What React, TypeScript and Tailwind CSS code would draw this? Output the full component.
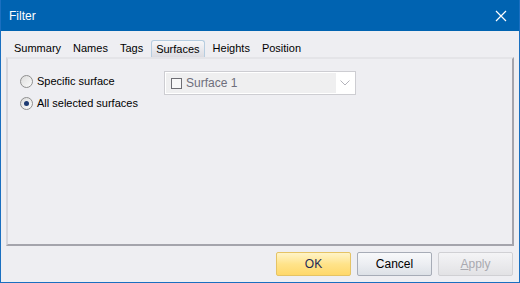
import React from "react";

const tabs = ["Summary", "Names", "Tags", "Surfaces", "Heights", "Position"];

function Radio({ checked }: { checked?: boolean }) {
  return (
    <span className="flex h-[13px] w-[13px] items-center justify-center rounded-full border border-[#8f8f8f] bg-gradient-to-br from-[#dcdcdc] to-[#fbfbfb]">
      {checked && <span className="h-[5px] w-[5px] rounded-full bg-[#1d3a72]" />}
    </span>
  );
}

export default function App() {
  return (
    <div
      className="flex h-[283px] w-[520px] flex-col border border-t-0 border-[#1a6fc0] bg-[#eeeef2] text-[11px] text-black"
      style={{ fontFamily: '"Liberation Sans", Arial, sans-serif' }}
    >
      {/* title bar */}
      <div className="flex h-[31px] items-center justify-between bg-[#0063b1] pl-[8px] pr-[10px] text-white">
        <span className="text-[12px]">Filter</span>
        <svg width="12" height="12" viewBox="0 0 12 12" className="mr-[2px]">
          <path d="M1 1 L11 11 M11 1 L1 11" stroke="#fff" strokeWidth="1.2" />
        </svg>
      </div>

      {/* tabs */}
      <div className="flex h-[26px] items-end pl-[7px] pt-[8px]">
        {tabs.map((t) =>
          t === "Surfaces" ? (
            <div
              key={t}
              className="mx-[2px] flex h-[17px] items-center rounded-t-[3px] border border-b-0 border-[#b6cde0] bg-gradient-to-b from-[#f7f7f9] to-[#dcdce2] px-[4px] leading-none"
            >
              {t}
            </div>
          ) : (
            <div key={t} className="flex h-[17px] items-center px-[6px] leading-none">
              {t}
            </div>
          )
        )}
      </div>

      {/* panel */}
      <div className="mx-[5px] h-[189px] border-2 border-l-[#d6d6dc] border-t-[#e4e4e8] border-r-[#a4a4ac] border-b-[#a4a4ac]">
        <div className="flex items-start pl-[12px] pt-[12px]">
          <div className="flex w-[144px] flex-col gap-[6px] pt-[2px] leading-[16px]">
            <label className="flex items-center gap-[4px]">
              <Radio />
              <span>Specific surface</span>
            </label>
            <label className="flex items-center gap-[4px]">
              <Radio checked />
              <span>All selected surfaces</span>
            </label>
          </div>
          <div className="flex h-[24px] w-[192px] items-stretch border border-[#cdcdd2] bg-white p-[1px]">
            <div className="flex flex-1 items-center gap-[4px] bg-[#efeff0] pl-[5px] text-[#6e6e7c]">
              <span className="h-[11px] w-[11px] border border-[#6e6e74] bg-[#f8f8f8]" />
              <span className="text-[12px]">Surface 1</span>
            </div>
            <div className="flex w-[18px] items-center justify-center">
              <svg width="10" height="6" viewBox="0 0 10 6">
                <path d="M0.5 0.5 L5 5 L9.5 0.5" fill="none" stroke="#b4b4bc" strokeWidth="1" />
              </svg>
            </div>
          </div>
        </div>
      </div>

      {/* buttons */}
      <div className="flex justify-end gap-[6px] pr-[6px] pt-[6px] text-[12px]">
        <button className="h-[24px] w-[75px] rounded-[2px] border border-[#e5c365] bg-gradient-to-b from-[#fff4c7] via-[#ffe38a] to-[#ffd86a] text-[#1e2b57]">
          OK
        </button>
        <button className="h-[24px] w-[75px] rounded-[2px] border border-[#a7acb7] bg-gradient-to-b from-[#f8f9fb] via-[#eceef2] to-[#dde1e7] text-black">
          Cancel
        </button>
        <button className="h-[24px] w-[75px] rounded-[2px] border border-[#d0d0d4] bg-gradient-to-b from-[#f4f4f6] to-[#e2e2e5] text-[#a9a9b0]">
          <span className="underline">A</span>pply
        </button>
      </div>
    </div>
  );
}
